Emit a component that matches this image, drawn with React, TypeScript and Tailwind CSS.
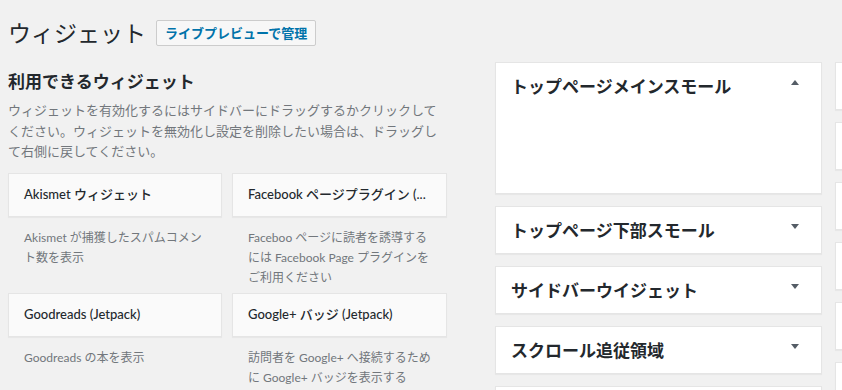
import React from "react";

const font = "font-['Lato','Noto_Sans_CJK_JP',sans-serif]";

function Card({ title, desc }: { title: string; desc: React.ReactNode }) {
  return (
    <div className="flex flex-col">
      <div className="h-[44px] border border-[#e5e5e5] bg-[#fafafa] shadow-[0_1px_1px_rgba(0,0,0,0.04)] px-[15px] flex items-center text-[13px] font-medium text-[#23282d] whitespace-nowrap overflow-hidden">
        {title}
      </div>
      <p className="pt-[11px] pb-[5px] px-[16px] text-[12px] leading-[20px] text-[#72777c]">{desc}</p>
    </div>
  );
}

function Tri({ up }: { up?: boolean }) {
  return up ? (
    <span className="block w-0 h-0 border-l-[4px] border-r-[4px] border-b-[5px] border-l-transparent border-r-transparent border-b-[#555d66]" />
  ) : (
    <span className="block w-0 h-0 border-l-[4px] border-r-[4px] border-t-[5px] border-l-transparent border-r-transparent border-t-[#555d66]" />
  );
}

function Area({ title, up, tall }: { title: string; up?: boolean; tall?: boolean }) {
  return (
    <div
      className={`${tall ? "h-[132px]" : "h-[48px]"} shrink-0 bg-white border border-[#e5e5e5] shadow-[0_1px_1px_rgba(0,0,0,0.04)] flex items-start justify-between`}
    >
      <h2 className="pl-[15px] pt-[14px] text-[17px] leading-[20px] font-bold text-[#23282d] whitespace-nowrap">{title}</h2>
      <div className="mt-[17px] mr-[22px]">
        <Tri up={up} />
      </div>
    </div>
  );
}

export default function App() {
  return (
    <div className={`w-[842px] h-[390px] overflow-hidden bg-[#f1f1f1] pl-[8px] pt-[20px] ${font}`}>
      <div className="flex items-center h-[26px]">
        <h1 className="text-[23px] leading-[26px] font-normal text-[#23282d]">ウィジェット</h1>
        <button className="ml-[10px] h-[26px] px-[8px] border border-[#cccccc] bg-[#f7f7f7] rounded-[2px] text-[13px] leading-[24px] font-semibold text-[#0073aa]">
          ライブプレビューで管理
        </button>
      </div>
      <div className="flex mt-[16px]">
        <div className="w-[439px] shrink-0 pt-[8px]">
          <h2 className="text-[17px] leading-[24px] font-bold text-[#23282d]">利用できるウィジェット</h2>
          <p className="mt-[6px] text-[13px] leading-[20.5px] text-[#72777c]">
            ウィジェットを有効化するにはサイドバーにドラッグするかクリックして
            <br />
            ください。ウィジェットを無効化し設定を削除したい場合は、ドラッグし
            <br />
            て右側に戻してください。
          </p>
          <div className="mt-[11px] grid grid-cols-[214px_215px] gap-x-[10px]">
            <Card
              title="Akismet ウィジェット"
              desc={
                <>
                  Akismet が捕獲したスパムコメン
                  <br />
                  ト数を表示
                </>
              }
            />
            <Card
              title="Facebook ページプラグイン (..."
              desc={
                <>
                  Faceboo ページに読者を誘導する
                  <br />
                  には Facebook Page プラグインを
                  <br />
                  ご利用ください
                </>
              }
            />
            <Card title="Goodreads (Jetpack)" desc={<>Goodreads の本を表示</>} />
            <Card
              title="Google+ バッジ (Jetpack)"
              desc={
                <>
                  訪問者を Google+ へ接続するため
                  <br />
                  に Google+ バッジを表示する
                </>
              }
            />
          </div>
        </div>
        <div className="ml-[48px] w-[327px] shrink-0 flex flex-col gap-[12px]">
          <Area title="トップページメインスモール" up tall />
          <Area title="トップページ下部スモール" />
          <Area title="サイドバーウイジェット" />
          <Area title="スクロール追従領域" />
          <Area title="" />
        </div>
        <div className="ml-[13px] w-[327px] shrink-0 flex flex-col gap-[12px]">
          {[0, 1, 2, 3, 4, 5].map((i) => (
            <div key={i} className="h-[48px] shrink-0 bg-white border border-[#e5e5e5] shadow-[0_1px_1px_rgba(0,0,0,0.04)]" />
          ))}
        </div>
      </div>
    </div>
  );
}
